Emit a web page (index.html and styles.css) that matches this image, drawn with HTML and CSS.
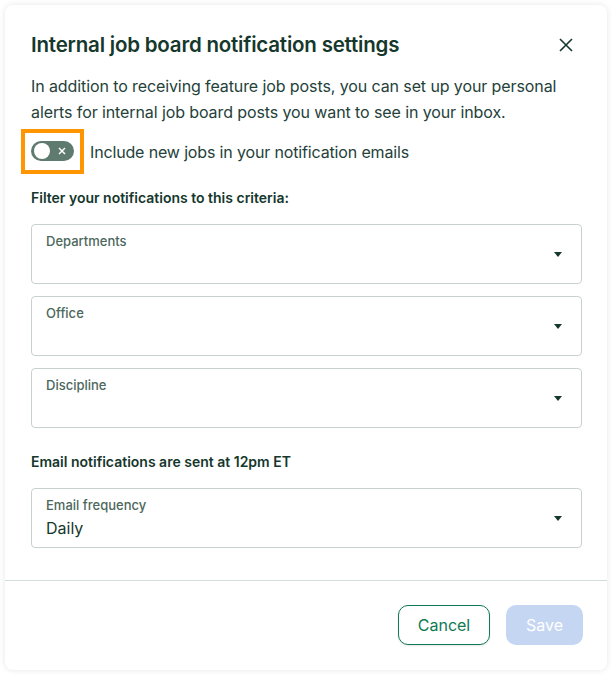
FILE: index.html
```html
<!DOCTYPE html>
<html>
<head>
<meta charset="utf-8">
<link rel="stylesheet" href="styles.css">
</head>
<body>
<div class="modal">
  <div class="modal-body">
    <div class="header">
      <h1 class="title">Internal job board notification settings</h1>
      <button class="close" aria-label="Close">
        <svg width="14" height="14" viewBox="0 0 14 14"><path d="M1 1L13 13M13 1L1 13" stroke="#15372c" stroke-width="1.6" fill="none"/></svg>
      </button>
    </div>
    <p class="desc">In addition to receiving feature job posts, you can set up your personal alerts for internal job board posts you want to see in your inbox.</p>
    <div class="toggle-row">
      <span class="focus-ring">
        <span class="toggle">
          <span class="knob"></span>
          <svg class="toggle-x" width="8" height="8" viewBox="0 0 8 8"><path d="M1 1L7 7M7 1L1 7" stroke="#fff" stroke-width="1.5" fill="none"/></svg>
        </span>
      </span>
      <span class="toggle-label">Include new jobs in your notification emails</span>
    </div>
    <div class="section-label filter-label">Filter your notifications to this criteria:</div>
    <div class="selects">
      <div class="select"><div class="select-text"><span class="select-label">Departments</span></div><span class="caret"></span></div>
      <div class="select"><div class="select-text"><span class="select-label">Office</span></div><span class="caret"></span></div>
      <div class="select"><div class="select-text"><span class="select-label">Discipline</span></div><span class="caret"></span></div>
    </div>
    <div class="section-label email-label">Email notifications are sent at 12pm ET</div>
    <div class="select freq"><div class="select-text"><span class="select-label">Email frequency</span><span class="select-value">Daily</span></div><span class="caret"></span></div>
  </div>
  <div class="footer">
    <button class="btn btn-cancel">Cancel</button>
    <button class="btn btn-save">Save</button>
  </div>
</div>
</body>
</html>
```
FILE: styles.css
```css
* { box-sizing: border-box; }
html, body { margin: 0; padding: 0; background: #fff; }
body { font-family: Inter, "Noto Sans", sans-serif; color: #24413a; }
.modal {
  margin: 5px;
  width: 602px;
  height: 665px;
  background: #fff;
  border-radius: 8px;
  box-shadow: 0 0 6px rgba(0,0,0,0.1);
  display: flex;
  flex-direction: column;
}
.modal-body {
  padding: 28px 25px 32px 26px;
  border-bottom: 1px solid #d3dcd8;
}
.header { display: flex; align-items: center; justify-content: space-between; }
.title {
  margin: 0;
  font-size: 20.5px;
  line-height: 24px;
  font-weight: 600;
  color: #15372c;
  letter-spacing: -0.2px;
}
.close {
  border: 0; background: none; padding: 0; margin-right: 9px;
  width: 14px; height: 14px; display: flex;
}
.desc {
  margin: 16px 0 0;
  font-size: 16px;
  line-height: 26px;
  color: #24413a;
  letter-spacing: -0.1px;
}
.toggle-row { display: flex; align-items: center; margin-top: 4px; }
.focus-ring {
  display: flex;
  margin-left: -10px;
  border: 4px solid #ff9500;
  padding: 8px 6px 9px;
}
.toggle {
  width: 43px; height: 20px;
  border-radius: 10px;
  background: #5f7a6e;
  display: flex; align-items: center;
  padding: 0 3px;
  gap: 8px;
}
.knob { width: 16px; height: 16px; border-radius: 50%; background: #fff; }
.toggle-label { margin-left: 6px; font-size: 16px; line-height: 24px; color: #24413a; letter-spacing: -0.15px; }
.section-label {
  font-size: 14px;
  line-height: 20px;
  font-weight: 600;
  color: #15372c;
}
.filter-label { margin-top: 14px; }
.selects { display: flex; flex-direction: column; gap: 12px; margin-top: 16px; }
.select {
  height: 60px;
  border: 1px solid #c9d1cd;
  border-radius: 4px;
  display: flex;
  align-items: center;
  justify-content: space-between;
  padding: 0 19px 0 14px;
}
.select-text { display: flex; flex-direction: column; align-self: flex-start; padding-top: 7px; }
.select-label { font-size: 13px; line-height: 18px; font-weight: 500; color: #4c675c; }
.select-value { font-size: 16px; line-height: 24px; color: #15372c; margin-top: 2px; }
.caret {
  width: 0; height: 0;
  border-left: 4px solid transparent;
  border-right: 4px solid transparent;
  border-top: 5px solid #15372c;
}
.email-label { margin-top: 24px; }
.freq { margin-top: 16px; }
.footer {
  display: flex;
  justify-content: flex-end;
  gap: 16px;
  padding: 24px 24px 25px;
}
.btn {
  height: 40px;
  border-radius: 10px;
  font-family: Inter, "Noto Sans", sans-serif;
  font-size: 16px;
  padding: 0;
}
.btn-cancel { width: 92px; background: #fff; border: 1px solid #0e7a52; color: #0e7a52; box-shadow: 0 1px 2px rgba(0,0,0,0.1); }
.btn-save { width: 77px; background: #c5d6f2; border: 0; color: #fff; }
```
